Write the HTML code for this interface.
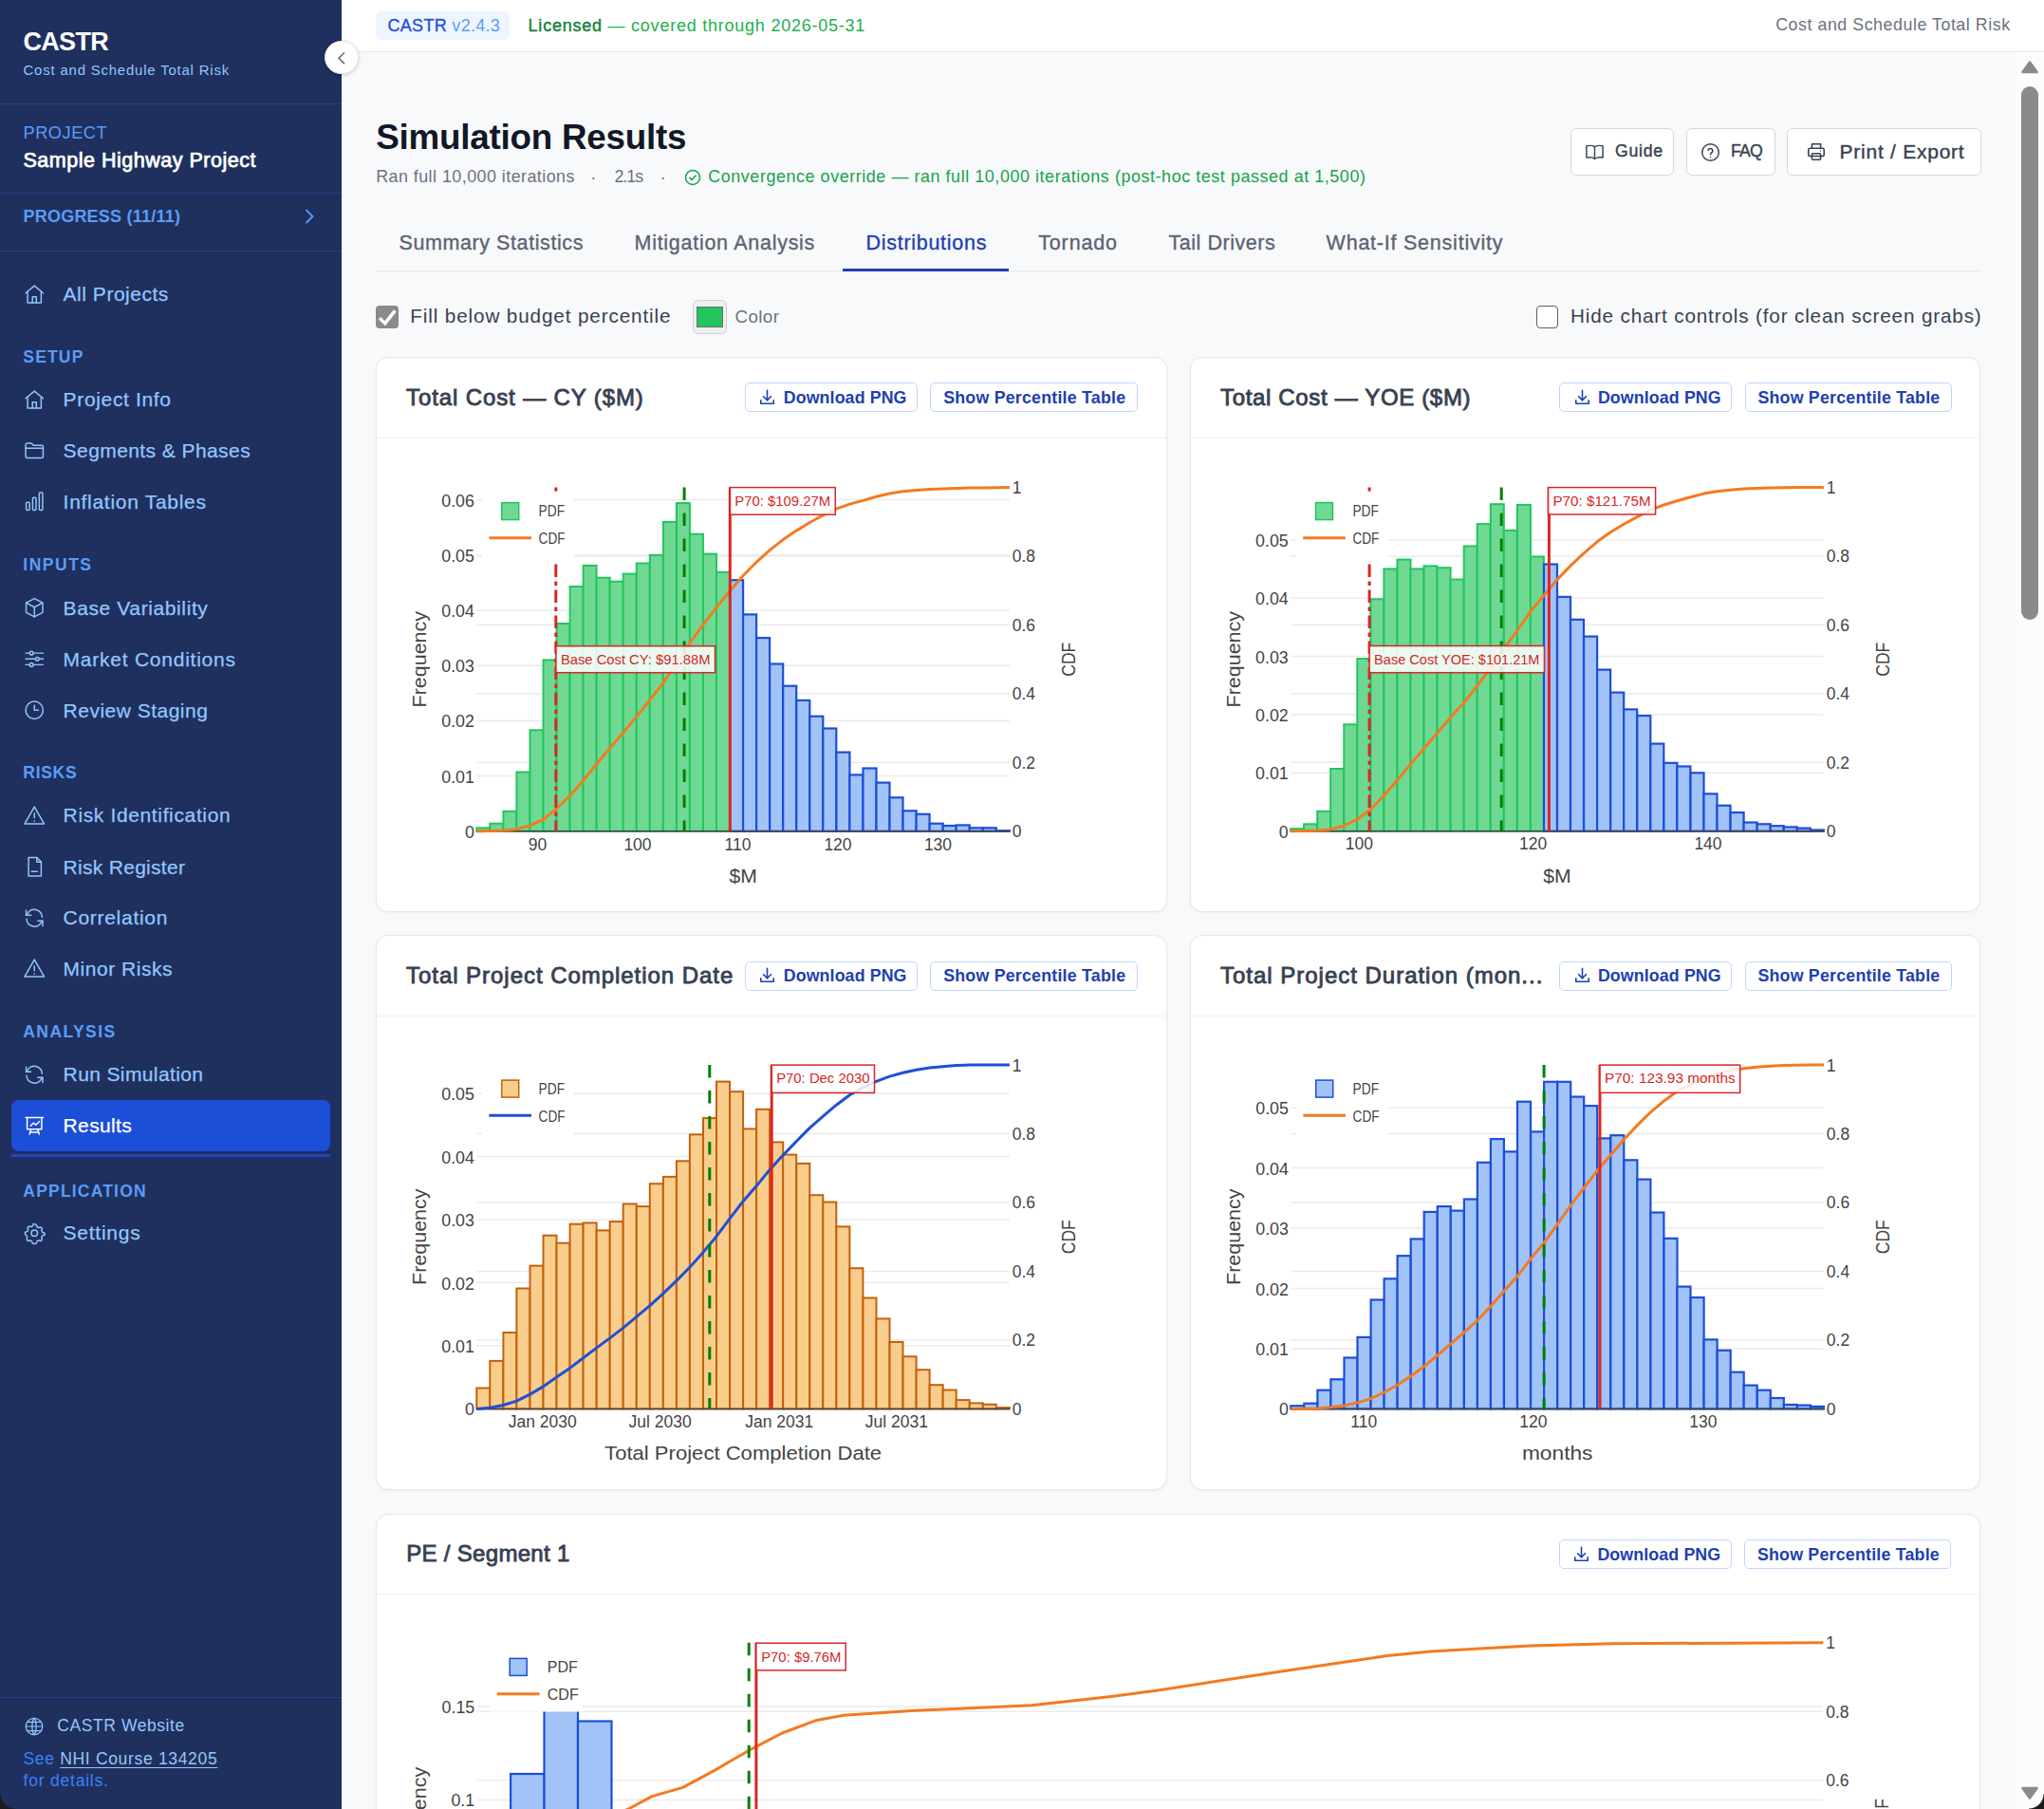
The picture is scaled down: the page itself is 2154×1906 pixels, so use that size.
<!DOCTYPE html><html><head><meta charset="utf-8"><title>CASTR</title><style>
*{margin:0;padding:0;box-sizing:border-box}
html,body{width:2154px;height:1906px;overflow:hidden;background:#f8f9fb;font-family:"Liberation Sans",sans-serif}
.t{position:absolute;white-space:nowrap;line-height:1}
.ic{position:absolute;overflow:visible}
#sb{position:absolute;left:0;top:0;width:360px;height:1906px;background:#1f305e}
.hr{position:absolute;left:0;width:360px;height:1.2px;background:#21408e}
#top{position:absolute;left:360px;top:0;width:1794px;height:55.2px;background:#fff;border-bottom:1.2px solid #e5e7eb}
.card{position:absolute;background:#fff;border:1.3px solid #e6e8eb;border-radius:13px;box-shadow:0 1px 3px rgba(0,0,0,.05)}
#ch{position:absolute;left:0;top:0;overflow:hidden}
#root{position:relative;width:2154px;height:1906px;overflow:hidden}
</style></head><body><div id="root">
<div id="sb"></div>
<div class="t" id="t1" style="left:24.5px;top:30.94px;font-size:27px;color:#ffffff;font-weight:700;letter-spacing:-0.695px;">CASTR</div>
<div class="t" id="t2" style="left:24.5px;top:67.39px;font-size:14.9px;color:#93c5fd;font-weight:400;letter-spacing:0.831px;">Cost and Schedule Total Risk</div>
<div class="hr" style="top:109px"></div>
<div class="t" id="t3" style="left:24.5px;top:130.59px;font-size:18.2px;color:#5b9cf6;font-weight:400;letter-spacing:0.534px;">PROJECT</div>
<div class="t" id="t4" style="left:24.5px;top:158.90px;font-size:21.5px;color:#ffffff;font-weight:400;letter-spacing:0.508px;-webkit-text-stroke:0.75px #ffffff">Sample Highway Project</div>
<div class="hr" style="top:203px"></div>
<div class="t" id="t5" style="left:24.5px;top:218.56px;font-size:18px;color:#5b9cf6;font-weight:700;letter-spacing:0.220px;">PROGRESS (11/11)</div>
<svg class="ic" style="left:316px;top:218px;width:20px;height:20px" viewBox="0 0 20 20"><path d="M7 3.5 13.5 10 7 16.5" fill="none" stroke="#5b9cf6" stroke-width="1.8" stroke-linecap="round"/></svg>
<div class="hr" style="top:264px"></div>
<div style="position:absolute;left:12.2px;top:1159.2px;width:335.6px;height:53.5px;background:#1d4ed8;border-radius:7.5px"></div>
<div style="position:absolute;left:12.2px;top:1216.3px;width:335.6px;height:2.6px;background:#2545b8"></div>
<svg class="ic" style="left:23.5px;top:297.7px;width:24.5px;height:24.5px;color:#93c5fd" viewBox="0 0 24 24" fill="none" stroke="currentColor" stroke-width="1.45" stroke-linecap="round" stroke-linejoin="round"><path d="M3 10.5 12 3l9 7.5"/><path d="M5 9v11.5h14V9"/><path d="M10 20.5v-6h4v6"/></svg>
<div class="t" id="t6" style="left:66.6px;top:299.22px;font-size:21px;color:#93c5fd;font-weight:400;letter-spacing:0.521px;-webkit-text-stroke:0.25px #93c5fd">All Projects</div>
<div class="t" id="t7" style="left:24.3px;top:368.09px;font-size:17.5px;color:#5b9cf6;font-weight:700;letter-spacing:1.173px;">SETUP</div>
<svg class="ic" style="left:23.5px;top:408.7px;width:24.5px;height:24.5px;color:#93c5fd" viewBox="0 0 24 24" fill="none" stroke="currentColor" stroke-width="1.45" stroke-linecap="round" stroke-linejoin="round"><path d="M3 10.5 12 3l9 7.5"/><path d="M5 9v11.5h14V9"/><path d="M10 20.5v-6h4v6"/></svg>
<div class="t" id="t8" style="left:66.6px;top:410.22px;font-size:21px;color:#93c5fd;font-weight:400;letter-spacing:0.657px;-webkit-text-stroke:0.25px #93c5fd">Project Info</div>
<svg class="ic" style="left:23.5px;top:462.3px;width:24.5px;height:24.5px;color:#93c5fd" viewBox="0 0 24 24" fill="none" stroke="currentColor" stroke-width="1.45" stroke-linecap="round" stroke-linejoin="round"><path d="M3 6.5a1.5 1.5 0 0 1 1.5-1.5h4.5l2 2h8.5A1.5 1.5 0 0 1 21 8.5v10a1.5 1.5 0 0 1-1.5 1.5h-15A1.5 1.5 0 0 1 3 18.5z"/><path d="M3 10h18"/></svg>
<div class="t" id="t9" style="left:66.6px;top:463.82px;font-size:21px;color:#93c5fd;font-weight:400;letter-spacing:0.424px;-webkit-text-stroke:0.25px #93c5fd">Segments & Phases</div>
<svg class="ic" style="left:23.5px;top:516.4000000000001px;width:24.5px;height:24.5px;color:#93c5fd" viewBox="0 0 24 24" fill="none" stroke="currentColor" stroke-width="1.45" stroke-linecap="round" stroke-linejoin="round"><rect x="3.5" y="13" width="3.5" height="8" rx="1"/><rect x="10.25" y="8" width="3.5" height="13" rx="1"/><rect x="17" y="3" width="3.5" height="18" rx="1"/></svg>
<div class="t" id="t10" style="left:66.6px;top:517.92px;font-size:21px;color:#93c5fd;font-weight:400;letter-spacing:0.709px;-webkit-text-stroke:0.25px #93c5fd">Inflation Tables</div>
<div class="t" id="t11" style="left:24.3px;top:586.89px;font-size:17.5px;color:#5b9cf6;font-weight:700;letter-spacing:1.512px;">INPUTS</div>
<svg class="ic" style="left:23.5px;top:628.1px;width:24.5px;height:24.5px;color:#93c5fd" viewBox="0 0 24 24" fill="none" stroke="currentColor" stroke-width="1.45" stroke-linecap="round" stroke-linejoin="round"><path d="M12 2.5 20.5 7v10L12 21.5 3.5 17V7z"/><path d="M3.5 7 12 11.5 20.5 7"/><path d="M12 11.5v10"/></svg>
<div class="t" id="t12" style="left:66.6px;top:629.62px;font-size:21px;color:#93c5fd;font-weight:400;letter-spacing:0.605px;-webkit-text-stroke:0.25px #93c5fd">Base Variability</div>
<svg class="ic" style="left:23.5px;top:682.4000000000001px;width:24.5px;height:24.5px;color:#93c5fd" viewBox="0 0 24 24" fill="none" stroke="currentColor" stroke-width="1.45" stroke-linecap="round" stroke-linejoin="round"><path d="M3 6h18M3 12h18M3 18h18"/><circle cx="9" cy="6" r="1.8" fill="#1f305e"/><circle cx="15" cy="12" r="1.8" fill="#1f305e"/><circle cx="9" cy="18" r="1.8" fill="#1f305e"/></svg>
<div class="t" id="t13" style="left:66.6px;top:683.92px;font-size:21px;color:#93c5fd;font-weight:400;letter-spacing:0.757px;-webkit-text-stroke:0.25px #93c5fd">Market Conditions</div>
<svg class="ic" style="left:23.5px;top:736.3000000000001px;width:24.5px;height:24.5px;color:#93c5fd" viewBox="0 0 24 24" fill="none" stroke="currentColor" stroke-width="1.45" stroke-linecap="round" stroke-linejoin="round"><circle cx="12" cy="12" r="9"/><path d="M12 7v5h4"/></svg>
<div class="t" id="t14" style="left:66.6px;top:737.82px;font-size:21px;color:#93c5fd;font-weight:400;letter-spacing:0.488px;-webkit-text-stroke:0.25px #93c5fd">Review Staging</div>
<div class="t" id="t15" style="left:24.3px;top:806.29px;font-size:17.5px;color:#5b9cf6;font-weight:700;letter-spacing:0.716px;">RISKS</div>
<svg class="ic" style="left:23.5px;top:846.9000000000001px;width:24.5px;height:24.5px;color:#93c5fd" viewBox="0 0 24 24" fill="none" stroke="currentColor" stroke-width="1.45" stroke-linecap="round" stroke-linejoin="round"><path d="M12 3 22 20.5H2z"/><path d="M12 9.5v5"/><path d="M12 17.6v.2"/></svg>
<div class="t" id="t16" style="left:66.6px;top:848.42px;font-size:21px;color:#93c5fd;font-weight:400;letter-spacing:0.638px;-webkit-text-stroke:0.25px #93c5fd">Risk Identification</div>
<svg class="ic" style="left:23.5px;top:901.3000000000001px;width:24.5px;height:24.5px;color:#93c5fd" viewBox="0 0 24 24" fill="none" stroke="currentColor" stroke-width="1.45" stroke-linecap="round" stroke-linejoin="round"><path d="M6 2.5h8.5l4.5 4.5v14.5H6z"/><path d="M14.5 2.5V7H19"/><path d="M9 17h6"/></svg>
<div class="t" id="t17" style="left:66.6px;top:902.82px;font-size:21px;color:#93c5fd;font-weight:400;letter-spacing:0.290px;-webkit-text-stroke:0.25px #93c5fd">Risk Register</div>
<svg class="ic" style="left:23.5px;top:954.9000000000001px;width:24.5px;height:24.5px;color:#93c5fd" viewBox="0 0 24 24" fill="none" stroke="currentColor" stroke-width="1.45" stroke-linecap="round" stroke-linejoin="round"><path d="M20 11a8 8 0 0 0-14.6-4.2L3.5 9"/><path d="M3.5 4v5h5"/><path d="M4 13a8 8 0 0 0 14.6 4.2l1.9-2.2"/><path d="M20.5 20v-5h-5"/></svg>
<div class="t" id="t18" style="left:66.6px;top:956.42px;font-size:21px;color:#93c5fd;font-weight:400;letter-spacing:0.704px;-webkit-text-stroke:0.25px #93c5fd">Correlation</div>
<svg class="ic" style="left:23.5px;top:1008.3px;width:24.5px;height:24.5px;color:#93c5fd" viewBox="0 0 24 24" fill="none" stroke="currentColor" stroke-width="1.45" stroke-linecap="round" stroke-linejoin="round"><path d="M12 3 22 20.5H2z"/><path d="M12 9.5v5"/><path d="M12 17.6v.2"/></svg>
<div class="t" id="t19" style="left:66.6px;top:1009.82px;font-size:21px;color:#93c5fd;font-weight:400;letter-spacing:0.517px;-webkit-text-stroke:0.25px #93c5fd">Minor Risks</div>
<div class="t" id="t20" style="left:24.3px;top:1078.89px;font-size:17.5px;color:#5b9cf6;font-weight:700;letter-spacing:1.423px;">ANALYSIS</div>
<svg class="ic" style="left:23.5px;top:1119.6000000000001px;width:24.5px;height:24.5px;color:#93c5fd" viewBox="0 0 24 24" fill="none" stroke="currentColor" stroke-width="1.45" stroke-linecap="round" stroke-linejoin="round"><path d="M20 11a8 8 0 0 0-14.6-4.2L3.5 9"/><path d="M3.5 4v5h5"/><path d="M4 13a8 8 0 0 0 14.6 4.2l1.9-2.2"/><path d="M20.5 20v-5h-5"/></svg>
<div class="t" id="t21" style="left:66.6px;top:1121.12px;font-size:21px;color:#93c5fd;font-weight:400;letter-spacing:0.381px;-webkit-text-stroke:0.25px #93c5fd">Run Simulation</div>
<svg class="ic" style="left:23.5px;top:1173.5px;width:24.5px;height:24.5px;color:#ffffff" viewBox="0 0 24 24" fill="none" stroke="currentColor" stroke-width="1.45" stroke-linecap="round" stroke-linejoin="round"><path d="M3 3.5h18"/><path d="M4.5 3.5v12h15v-12"/><path d="M8 12l3-3 2.5 2 3.5-3.5"/><path d="M8.5 15.5 7 20.5M15.5 15.5l1.5 5M7.5 18.5h9"/></svg>
<div class="t" id="t22" style="left:66.6px;top:1175.02px;font-size:21px;color:#ffffff;font-weight:400;letter-spacing:0.355px;-webkit-text-stroke:0.25px #ffffff">Results</div>
<div class="t" id="t23" style="left:24.3px;top:1246.89px;font-size:17.5px;color:#5b9cf6;font-weight:700;letter-spacing:1.202px;">APPLICATION</div>
<svg class="ic" style="left:23.5px;top:1286.9px;width:24.5px;height:24.5px;color:#93c5fd" viewBox="0 0 24 24" fill="none" stroke="currentColor" stroke-width="1.45" stroke-linecap="round" stroke-linejoin="round"><path d="M12 2.8l2 .4.6 2.2 1.8 1 2.2-.6 1.4 1.5-.6 2.2 1 1.8 2.2.6v2l-2.2.6-1 1.8.6 2.2-1.4 1.5-2.2-.6-1.8 1-.6 2.2-2 .4-2-.4-.6-2.2-1.8-1-2.2.6-1.4-1.5.6-2.2-1-1.8L2.4 13v-2l2.2-.6 1-1.8L5 6.4l1.4-1.5 2.2.6 1.8-1 .6-2.2z"/><circle cx="12" cy="12" r="3.2"/></svg>
<div class="t" id="t24" style="left:66.6px;top:1288.42px;font-size:21px;color:#93c5fd;font-weight:400;letter-spacing:0.738px;-webkit-text-stroke:0.25px #93c5fd">Settings</div>
<div class="hr" style="top:1788px"></div>
<svg class="ic" style="left:25.4px;top:1807.5px;width:22px;height:22px;color:#93c5fd" viewBox="0 0 24 24" fill="none" stroke="currentColor" stroke-width="1.35" stroke-linecap="round" stroke-linejoin="round"><circle cx="12" cy="12" r="9.5"/><path d="M2.5 12h19"/><path d="M12 2.5c3 3 3 16 0 19M12 2.5c-3 3-3 16 0 19"/><path d="M4 7h16M4 17h16"/></svg>
<div class="t" id="t25" style="left:60.3px;top:1810.19px;font-size:17.5px;color:#93c5fd;font-weight:400;letter-spacing:0.573px;">CASTR Website</div>
<div class="t" id="t26" style="left:24.5px;top:1845.49px;font-size:17.5px;color:#3b82f6;font-weight:400;letter-spacing:0.674px;">See <span style="color:#9cc3f8;text-decoration:underline;text-underline-offset:3px;text-decoration-thickness:1px">NHI Course 134205</span></div>
<div class="t" id="t27" style="left:24.5px;top:1867.99px;font-size:17.5px;color:#3b82f6;font-weight:400;letter-spacing:0.792px;">for details.</div>
<div id="top"></div>
<div style="position:absolute;left:396.2px;top:12px;width:141.2px;height:29.6px;background:#eef5ff;border-radius:6px"></div>
<div class="t" id="t28" style="left:408.5px;top:17.86px;font-size:18px;color:#1d4ed8;font-weight:400;letter-spacing:0.300px;"><span style="color:#1d4ed8;-webkit-text-stroke:0.3px #1d4ed8">CASTR</span> <span style="color:#5b9cf6">v2.4.3</span></div>
<div class="t" id="t29" style="left:556.6px;top:17.86px;font-size:18px;color:#22b04f;font-weight:400;letter-spacing:0.765px;"><span style="color:#15803d;-webkit-text-stroke:0.4px #15803d">Licensed</span> — covered through 2026-05-31</div>
<div class="t" id="t30" style="left:1871.2px;top:17.63px;font-size:17.8px;color:#6b7280;font-weight:400;letter-spacing:0.552px;">Cost and Schedule Total Risk</div>
<div style="position:absolute;left:342.2px;top:42.8px;width:35.4px;height:35.4px;border-radius:50%;background:#fff;border:1px solid #e9eaec;box-shadow:0 1px 4px rgba(0,0,0,.18)"></div>
<svg class="ic" style="left:350px;top:50.6px;width:20px;height:20px" viewBox="0 0 20 20"><path d="M12.6 4.6 7 10.2l5.6 5.6" fill="none" stroke="#4b5563" stroke-width="1.3" stroke-linecap="round"/></svg>
<div class="t" id="t31" style="left:396.2px;top:126.95px;font-size:36.8px;color:#111827;font-weight:700;letter-spacing:-0.231px;">Simulation Results</div>
<div class="t" id="t32" style="left:396.2px;top:177.85px;font-size:17.9px;color:#6b7280;font-weight:400;letter-spacing:0.454px;">Ran full 10,000 iterations</div>
<div class="t" id="t33" style="left:622.3px;top:177.59px;font-size:18.8px;color:#6b7280;font-weight:400;letter-spacing:0.000px;">·</div>
<div class="t" id="t34" style="left:647.4px;top:177.85px;font-size:17.9px;color:#6b7280;font-weight:400;letter-spacing:-1.018px;">2.1s</div>
<div class="t" id="t35" style="left:695.6px;top:177.59px;font-size:18.8px;color:#6b7280;font-weight:400;letter-spacing:0.000px;">·</div>
<svg class="ic" style="left:720.5px;top:177.5px;width:18px;height:18px" viewBox="0 0 24 24" fill="none" stroke="#16a34a" stroke-width="2" stroke-linecap="round" stroke-linejoin="round"><circle cx="12" cy="12" r="10"/><path d="M8 12.5l2.8 2.7L16 9.5"/></svg>
<div class="t" id="t36" style="left:746.3px;top:177.85px;font-size:17.9px;color:#16a34a;font-weight:400;letter-spacing:0.577px;">Convergence override — ran full 10,000 iterations (post-hoc test passed at 1,500)</div>
<div style="position:absolute;left:1655.3px;top:135.1px;width:109.20000000000005px;height:49.5px;border:1.3px solid #d4d7dd;border-radius:6px;background:#fff;box-sizing:border-box"></div>
<div style="position:absolute;left:1777.3px;top:135.1px;width:93.40000000000009px;height:49.5px;border:1.3px solid #d4d7dd;border-radius:6px;background:#fff;box-sizing:border-box"></div>
<div style="position:absolute;left:1883.3px;top:135.1px;width:204.60000000000014px;height:49.5px;border:1.3px solid #d4d7dd;border-radius:6px;background:#fff;box-sizing:border-box"></div>
<svg class="ic" style="left:1669.5px;top:149.5px;width:21px;height:21px" viewBox="0 0 24 24" fill="none" stroke="#3d4655" stroke-width="1.7" stroke-linejoin="round"><path d="M12 5.2C10 4 6 3.6 2.2 4.2v14.2c3.8-.6 7.8-.2 9.8 1.6 2-1.8 6-2.2 9.8-1.6V4.2C18 3.6 14 4 12 5.2z"/><path d="M12 5.2V19.5"/></svg>
<div class="t" id="t37" style="left:1701.9px;top:150.92px;font-size:17.7px;color:#374151;font-weight:400;letter-spacing:0.740px;-webkit-text-stroke:0.4px #374151">Guide</div>
<svg class="ic" style="left:1791.5px;top:150px;width:21px;height:21px" viewBox="0 0 24 24" fill="none" stroke="#374151" stroke-width="1.7" stroke-linecap="round"><circle cx="12" cy="12" r="10"/><path d="M9.2 9.3a2.9 2.9 0 0 1 5.6 1c0 1.9-2.8 2.4-2.8 4.2"/><path d="M12 17.6v.2"/></svg>
<div class="t" id="t38" style="left:1824.0px;top:150.92px;font-size:17.7px;color:#374151;font-weight:400;letter-spacing:-0.764px;-webkit-text-stroke:0.4px #374151">FAQ</div>
<svg class="ic" style="left:1903px;top:149px;width:22px;height:22px" viewBox="0 0 24 24" fill="none" stroke="#374151" stroke-width="1.7" stroke-linejoin="round"><path d="M7 8V3h10v5"/><rect x="3" y="8" width="18" height="9" rx="2"/><rect x="7" y="14" width="10" height="7" rx="1"/><path d="M16.5 11h1"/></svg>
<div class="t" id="t39" style="left:1938.6px;top:149.12px;font-size:21px;color:#374151;font-weight:400;letter-spacing:0.744px;-webkit-text-stroke:0.4px #374151">Print / Export</div>
<div style="position:absolute;left:396px;top:284.7px;width:1691.6px;height:1.4px;background:#e5e7eb"></div>
<div class="t" id="t40" style="left:420.5px;top:246.30px;font-size:21.5px;color:#5b6472;font-weight:400;letter-spacing:0.583px;-webkit-text-stroke:0.35px #5b6472">Summary Statistics</div>
<div class="t" id="t41" style="left:668.5px;top:246.30px;font-size:21.5px;color:#5b6472;font-weight:400;letter-spacing:0.723px;-webkit-text-stroke:0.35px #5b6472">Mitigation Analysis</div>
<div class="t" id="t42" style="left:912.5px;top:246.30px;font-size:21.5px;color:#1e40af;font-weight:400;letter-spacing:0.716px;-webkit-text-stroke:0.35px #1e40af">Distributions</div>
<div class="t" id="t43" style="left:1094.2px;top:246.30px;font-size:21.5px;color:#5b6472;font-weight:400;letter-spacing:0.864px;-webkit-text-stroke:0.35px #5b6472">Tornado</div>
<div class="t" id="t44" style="left:1231.5px;top:246.30px;font-size:21.5px;color:#5b6472;font-weight:400;letter-spacing:0.533px;-webkit-text-stroke:0.35px #5b6472">Tail Drivers</div>
<div class="t" id="t45" style="left:1397.6px;top:246.30px;font-size:21.5px;color:#5b6472;font-weight:400;letter-spacing:0.769px;-webkit-text-stroke:0.35px #5b6472">What-If Sensitivity</div>
<div style="position:absolute;left:888.2px;top:283px;width:174.9px;height:3.1px;background:#1e40af"></div>
<div style="position:absolute;left:395.7px;top:322.3px;width:24px;height:24px;border-radius:4px;background:#8a8a8a"></div>
<svg class="ic" style="left:395.7px;top:322.3px;width:24px;height:24px" viewBox="0 0 24 24"><path d="M4 13.3l5.8 5.4L20.3 5.3" fill="none" stroke="#fff" stroke-width="3.6"/></svg>
<div class="t" id="t46" style="left:432.3px;top:323.48px;font-size:20.7px;color:#374151;font-weight:400;letter-spacing:0.872px;">Fill below budget percentile</div>
<div style="position:absolute;left:730.3px;top:316.3px;width:35.4px;height:35.6px;border-radius:5.5px;background:#efefef;border:1px solid #cdd1d8;box-sizing:border-box"></div>
<div style="position:absolute;left:733.9px;top:323.2px;width:28.2px;height:21.6px;background:#22c55e;border:1px solid #6f6f6f;box-sizing:border-box"></div>
<div class="t" id="t47" style="left:774.6px;top:325.29px;font-size:18.8px;color:#6b7280;font-weight:400;letter-spacing:0.359px;">Color</div>
<div style="position:absolute;left:1619.2px;top:322.2px;width:23.2px;height:23.7px;border-radius:4px;background:#fff;border:1.6px solid #5f5f5f;box-sizing:border-box"></div>
<div class="t" id="t48" style="left:1655px;top:323.48px;font-size:20.7px;color:#374151;font-weight:400;letter-spacing:0.838px;">Hide chart controls (for clean screen grabs)</div>
<div class="card" style="left:395.6px;top:376.0px;width:834.6999999999999px;height:585.3px"></div><div style="position:absolute;left:396.6px;top:460.6px;width:832.6999999999999px;height:1.3px;background:#f0f1f3"></div><div class="t" id="t49" style="left:428.0px;top:406.68px;font-size:24px;color:#374151;font-weight:400;letter-spacing:0.889px;-webkit-text-stroke:0.85px #374151">Total Cost — CY ($M)</div><div style="position:absolute;left:785.1px;top:403.4px;width:181.89999999999998px;height:30.900000000000034px;border:1.3px solid #bfd7fb;border-radius:5px;background:#fff;box-sizing:border-box"></div><div style="position:absolute;left:980.3px;top:403.4px;width:218.29999999999995px;height:30.900000000000034px;border:1.3px solid #bfd7fb;border-radius:5px;background:#fff;box-sizing:border-box"></div><svg class="ic" style="left:799.3px;top:409.0px;width:19px;height:19px" viewBox="0 0 24 24" fill="none" stroke="#1e40af" stroke-width="2" stroke-linecap="round" stroke-linejoin="round"><path d="M12 3v13"/><path d="M7 11l5 5 5-5"/><path d="M3.5 16v4.5h17V16"/></svg><div class="t" id="t50" style="left:825.7px;top:410.93px;font-size:17.8px;color:#1e40af;font-weight:700;letter-spacing:0.122px;">Download PNG</div><div class="t" id="t51" style="left:994.2px;top:410.93px;font-size:17.8px;color:#1e40af;font-weight:700;letter-spacing:0.222px;">Show Percentile Table</div>
<div class="card" style="left:1253.6px;top:376.0px;width:833.9000000000001px;height:585.3px"></div><div style="position:absolute;left:1254.6px;top:460.6px;width:831.9000000000001px;height:1.3px;background:#f0f1f3"></div><div class="t" id="t52" style="left:1286.0px;top:406.68px;font-size:24px;color:#374151;font-weight:400;letter-spacing:0.662px;-webkit-text-stroke:0.85px #374151">Total Cost — YOE ($M)</div><div style="position:absolute;left:1643.3000000000002px;top:403.4px;width:181.9000000000001px;height:30.900000000000034px;border:1.3px solid #bfd7fb;border-radius:5px;background:#fff;box-sizing:border-box"></div><div style="position:absolute;left:1838.5000000000002px;top:403.4px;width:218.29999999999995px;height:30.900000000000034px;border:1.3px solid #bfd7fb;border-radius:5px;background:#fff;box-sizing:border-box"></div><svg class="ic" style="left:1657.5px;top:409.0px;width:19px;height:19px" viewBox="0 0 24 24" fill="none" stroke="#1e40af" stroke-width="2" stroke-linecap="round" stroke-linejoin="round"><path d="M12 3v13"/><path d="M7 11l5 5 5-5"/><path d="M3.5 16v4.5h17V16"/></svg><div class="t" id="t53" style="left:1683.9px;top:410.93px;font-size:17.8px;color:#1e40af;font-weight:700;letter-spacing:0.122px;">Download PNG</div><div class="t" id="t54" style="left:1852.4px;top:410.93px;font-size:17.8px;color:#1e40af;font-weight:700;letter-spacing:0.222px;">Show Percentile Table</div>
<div class="card" style="left:395.6px;top:985.4px;width:834.6999999999999px;height:584.6px"></div><div style="position:absolute;left:396.6px;top:1070.0px;width:832.6999999999999px;height:1.3px;background:#f0f1f3"></div><div class="t" id="t55" style="left:428.0px;top:1016.08px;font-size:24px;color:#374151;font-weight:400;letter-spacing:0.959px;-webkit-text-stroke:0.85px #374151">Total Project Completion Date</div><div style="position:absolute;left:785.1px;top:1012.8px;width:181.89999999999998px;height:30.90000000000009px;border:1.3px solid #bfd7fb;border-radius:5px;background:#fff;box-sizing:border-box"></div><div style="position:absolute;left:980.3px;top:1012.8px;width:218.29999999999995px;height:30.90000000000009px;border:1.3px solid #bfd7fb;border-radius:5px;background:#fff;box-sizing:border-box"></div><svg class="ic" style="left:799.3px;top:1018.4px;width:19px;height:19px" viewBox="0 0 24 24" fill="none" stroke="#1e40af" stroke-width="2" stroke-linecap="round" stroke-linejoin="round"><path d="M12 3v13"/><path d="M7 11l5 5 5-5"/><path d="M3.5 16v4.5h17V16"/></svg><div class="t" id="t56" style="left:825.7px;top:1020.33px;font-size:17.8px;color:#1e40af;font-weight:700;letter-spacing:0.122px;">Download PNG</div><div class="t" id="t57" style="left:994.2px;top:1020.33px;font-size:17.8px;color:#1e40af;font-weight:700;letter-spacing:0.222px;">Show Percentile Table</div>
<div class="card" style="left:1253.6px;top:985.4px;width:833.9000000000001px;height:584.6px"></div><div style="position:absolute;left:1254.6px;top:1070.0px;width:831.9000000000001px;height:1.3px;background:#f0f1f3"></div><div class="t" id="t58" style="left:1286.0px;top:1016.08px;font-size:24px;color:#374151;font-weight:400;letter-spacing:0.984px;-webkit-text-stroke:0.85px #374151">Total Project Duration (mon...</div><div style="position:absolute;left:1643.3000000000002px;top:1012.8px;width:181.9000000000001px;height:30.90000000000009px;border:1.3px solid #bfd7fb;border-radius:5px;background:#fff;box-sizing:border-box"></div><div style="position:absolute;left:1838.5000000000002px;top:1012.8px;width:218.29999999999995px;height:30.90000000000009px;border:1.3px solid #bfd7fb;border-radius:5px;background:#fff;box-sizing:border-box"></div><svg class="ic" style="left:1657.5px;top:1018.4px;width:19px;height:19px" viewBox="0 0 24 24" fill="none" stroke="#1e40af" stroke-width="2" stroke-linecap="round" stroke-linejoin="round"><path d="M12 3v13"/><path d="M7 11l5 5 5-5"/><path d="M3.5 16v4.5h17V16"/></svg><div class="t" id="t59" style="left:1683.9px;top:1020.33px;font-size:17.8px;color:#1e40af;font-weight:700;letter-spacing:0.122px;">Download PNG</div><div class="t" id="t60" style="left:1852.4px;top:1020.33px;font-size:17.8px;color:#1e40af;font-weight:700;letter-spacing:0.222px;">Show Percentile Table</div>
<div class="card" style="left:395.9px;top:1594.6px;width:1691.1px;height:705.4000000000001px"></div><div style="position:absolute;left:396.9px;top:1679.1999999999998px;width:1689.1px;height:1.3px;background:#f0f1f3"></div><div class="t" id="t61" style="left:428.3px;top:1625.28px;font-size:24px;color:#374151;font-weight:400;letter-spacing:0.296px;-webkit-text-stroke:0.85px #374151">PE / Segment 1</div><div style="position:absolute;left:1642.8000000000002px;top:1622.0px;width:181.9000000000001px;height:30.899999999999864px;border:1.3px solid #bfd7fb;border-radius:5px;background:#fff;box-sizing:border-box"></div><div style="position:absolute;left:1838.0000000000002px;top:1622.0px;width:218.29999999999995px;height:30.899999999999864px;border:1.3px solid #bfd7fb;border-radius:5px;background:#fff;box-sizing:border-box"></div><svg class="ic" style="left:1657.0px;top:1627.6px;width:19px;height:19px" viewBox="0 0 24 24" fill="none" stroke="#1e40af" stroke-width="2" stroke-linecap="round" stroke-linejoin="round"><path d="M12 3v13"/><path d="M7 11l5 5 5-5"/><path d="M3.5 16v4.5h17V16"/></svg><div class="t" id="t62" style="left:1683.4px;top:1629.53px;font-size:17.8px;color:#1e40af;font-weight:700;letter-spacing:0.122px;">Download PNG</div><div class="t" id="t63" style="left:1851.9px;top:1629.53px;font-size:17.8px;color:#1e40af;font-weight:700;letter-spacing:0.222px;">Show Percentile Table</div>
<svg id="ch" width="2154" height="1906" viewBox="0 0 2154 1906"><line x1="502.3" x2="1063.9" y1="803.4" y2="803.4" stroke="#ebebeb" stroke-width="1.5"/>
<line x1="502.3" x2="1063.9" y1="730.9" y2="730.9" stroke="#ebebeb" stroke-width="1.5"/>
<line x1="502.3" x2="1063.9" y1="658.5" y2="658.5" stroke="#ebebeb" stroke-width="1.5"/>
<line x1="502.3" x2="1063.9" y1="586" y2="586" stroke="#ebebeb" stroke-width="1.5"/>
<line x1="502.3" x2="1063.9" y1="817.6" y2="817.6" stroke="#ebebeb" stroke-width="1.5"/>
<line x1="502.3" x2="1063.9" y1="759.4" y2="759.4" stroke="#ebebeb" stroke-width="1.5"/>
<line x1="502.3" x2="1063.9" y1="701.2" y2="701.2" stroke="#ebebeb" stroke-width="1.5"/>
<line x1="502.3" x2="1063.9" y1="643" y2="643" stroke="#ebebeb" stroke-width="1.5"/>
<line x1="502.3" x2="1063.9" y1="584.8" y2="584.8" stroke="#ebebeb" stroke-width="1.5"/>
<line x1="502.3" x2="1063.9" y1="526.6" y2="526.6" stroke="#ebebeb" stroke-width="1.5"/>
<rect x="502.3" y="872.3" width="14" height="3.5" fill="#6fd994" stroke="#22c55e" stroke-width="2.0"/>
<rect x="516.3" y="867.7" width="14" height="8.1" fill="#6fd994" stroke="#22c55e" stroke-width="2.0"/>
<rect x="530.4" y="854.8" width="14" height="21" fill="#6fd994" stroke="#22c55e" stroke-width="2.0"/>
<rect x="544.4" y="813.5" width="14" height="62.3" fill="#6fd994" stroke="#22c55e" stroke-width="2.0"/>
<rect x="558.5" y="769.3" width="14" height="106.5" fill="#6fd994" stroke="#22c55e" stroke-width="2.0"/>
<rect x="572.5" y="695.4" width="14" height="180.4" fill="#6fd994" stroke="#22c55e" stroke-width="2.0"/>
<rect x="586.5" y="657" width="14" height="218.8" fill="#6fd994" stroke="#22c55e" stroke-width="2.0"/>
<rect x="600.6" y="618" width="14" height="257.8" fill="#6fd994" stroke="#22c55e" stroke-width="2.0"/>
<rect x="614.6" y="595.9" width="14" height="279.9" fill="#6fd994" stroke="#22c55e" stroke-width="2.0"/>
<rect x="628.7" y="608.7" width="14" height="267.1" fill="#6fd994" stroke="#22c55e" stroke-width="2.0"/>
<rect x="642.7" y="612.7" width="14" height="263.1" fill="#6fd994" stroke="#22c55e" stroke-width="2.0"/>
<rect x="656.7" y="604.6" width="14" height="271.2" fill="#6fd994" stroke="#22c55e" stroke-width="2.0"/>
<rect x="670.8" y="593.5" width="14" height="282.3" fill="#6fd994" stroke="#22c55e" stroke-width="2.0"/>
<rect x="684.8" y="584.8" width="14" height="291" fill="#6fd994" stroke="#22c55e" stroke-width="2.0"/>
<rect x="698.9" y="549.9" width="14" height="325.9" fill="#6fd994" stroke="#22c55e" stroke-width="2.0"/>
<rect x="712.9" y="530.1" width="14" height="345.7" fill="#6fd994" stroke="#22c55e" stroke-width="2.0"/>
<rect x="726.9" y="562.7" width="14" height="313.1" fill="#6fd994" stroke="#22c55e" stroke-width="2.0"/>
<rect x="741" y="583.6" width="14" height="292.2" fill="#6fd994" stroke="#22c55e" stroke-width="2.0"/>
<rect x="755" y="602.8" width="14" height="273" fill="#6fd994" stroke="#22c55e" stroke-width="2.0"/>
<rect x="769.1" y="611.2" width="14" height="264.6" fill="#a1c3f8" stroke="#1d4ed8" stroke-width="2.2"/>
<rect x="783.1" y="647.4" width="14" height="228.4" fill="#a1c3f8" stroke="#1d4ed8" stroke-width="2.2"/>
<rect x="797.1" y="672.1" width="14" height="203.7" fill="#a1c3f8" stroke="#1d4ed8" stroke-width="2.2"/>
<rect x="811.2" y="699.5" width="14" height="176.3" fill="#a1c3f8" stroke="#1d4ed8" stroke-width="2.2"/>
<rect x="825.2" y="722.7" width="14" height="153.1" fill="#a1c3f8" stroke="#1d4ed8" stroke-width="2.2"/>
<rect x="839.3" y="737.9" width="14" height="137.9" fill="#a1c3f8" stroke="#1d4ed8" stroke-width="2.2"/>
<rect x="853.3" y="754.7" width="14" height="121.1" fill="#a1c3f8" stroke="#1d4ed8" stroke-width="2.2"/>
<rect x="867.3" y="767.5" width="14" height="108.3" fill="#a1c3f8" stroke="#1d4ed8" stroke-width="2.2"/>
<rect x="881.4" y="792.6" width="14" height="83.2" fill="#a1c3f8" stroke="#1d4ed8" stroke-width="2.2"/>
<rect x="895.4" y="816.4" width="14" height="59.4" fill="#a1c3f8" stroke="#1d4ed8" stroke-width="2.2"/>
<rect x="909.5" y="809.5" width="14" height="66.3" fill="#a1c3f8" stroke="#1d4ed8" stroke-width="2.2"/>
<rect x="923.5" y="824.6" width="14" height="51.2" fill="#a1c3f8" stroke="#1d4ed8" stroke-width="2.2"/>
<rect x="937.5" y="840.3" width="14" height="35.5" fill="#a1c3f8" stroke="#1d4ed8" stroke-width="2.2"/>
<rect x="951.6" y="854.3" width="14" height="21.5" fill="#a1c3f8" stroke="#1d4ed8" stroke-width="2.2"/>
<rect x="965.6" y="857.8" width="14" height="18" fill="#a1c3f8" stroke="#1d4ed8" stroke-width="2.2"/>
<rect x="979.7" y="867.7" width="14" height="8.1" fill="#a1c3f8" stroke="#1d4ed8" stroke-width="2.2"/>
<rect x="993.7" y="870" width="14" height="5.8" fill="#a1c3f8" stroke="#1d4ed8" stroke-width="2.2"/>
<rect x="1007.7" y="869.4" width="14" height="6.4" fill="#a1c3f8" stroke="#1d4ed8" stroke-width="2.2"/>
<rect x="1021.8" y="872.3" width="14" height="3.5" fill="#a1c3f8" stroke="#1d4ed8" stroke-width="2.2"/>
<rect x="1035.8" y="872.3" width="14" height="3.5" fill="#a1c3f8" stroke="#1d4ed8" stroke-width="2.2"/>
<rect x="1049.9" y="875.2" width="14" height="0.6" fill="#a1c3f8" stroke="#1d4ed8" stroke-width="2.2"/>
<line x1="502.3" x2="1063.9" y1="875.8" y2="875.8" stroke="#444" stroke-width="1.5"/>
<polyline points="502.3,875.8 516.3,875.6 530.4,875.1 544.4,873.8 558.5,869.9 572.5,863.3 586.5,852 600.6,838.4 614.6,822.4 628.7,805 642.7,788.3 656.7,772 670.8,755.1 684.8,737.5 698.9,719.4 712.9,699.1 726.9,677.6 741,658.1 755,639.9 769.1,622.9 783.1,606.5 797.1,592.3 811.2,579.6 825.2,568.6 839.3,559.1 853.3,550.5 867.3,543 881.4,536.2 895.4,531.1 909.5,527.4 923.5,523.2 937.5,520 951.6,517.8 965.6,516.5 979.7,515.4 993.7,514.9 1007.7,514.5 1021.8,514.1 1035.8,513.9 1049.9,513.7 1063.9,513.6" fill="none" stroke="#f47a20" stroke-width="3" stroke-linejoin="round"/>
<line x1="585.8" x2="585.8" y1="513.6" y2="875.8" stroke="#d62728" stroke-width="3" stroke-dasharray="13.5,4.5,4.5,4.5"/>
<line x1="721.1" x2="721.1" y1="513.6" y2="875.8" stroke="#008000" stroke-width="3" stroke-dasharray="13.5,13.5"/>
<line x1="769.3" x2="769.3" y1="513.6" y2="875.8" stroke="#dc2626" stroke-width="3"/>
<rect x="508" y="517.6" width="96.6" height="74" fill="#fff"/>
<rect x="528.7" y="529.6" width="18" height="18" fill="#6fd994" stroke="#22c55e" stroke-width="1.5"/>
<text x="567.6" y="544.2" font-family="Liberation Sans, sans-serif" font-size="16" fill="#444444" textLength="27.4" lengthAdjust="spacingAndGlyphs">PDF</text>
<line x1="515.4" x2="560" y1="566.8" y2="566.8" stroke="#f47a20" stroke-width="3"/>
<text x="567.6" y="573.3" font-family="Liberation Sans, sans-serif" font-size="16" fill="#444444" textLength="28" lengthAdjust="spacingAndGlyphs">CDF</text>
<rect x="769.3" y="513.6" width="110.9" height="28.6" fill="rgba(255,255,255,0.86)" stroke="#d62728" stroke-width="1.5"/>
<text x="774.3" y="532.9" font-family="Liberation Sans, sans-serif" font-size="15.4" fill="#d62728" textLength="100.9" lengthAdjust="spacingAndGlyphs">P70: $109.27M</text>
<rect x="585.9" y="680.7" width="167.6" height="28" fill="rgba(255,255,255,0.86)" stroke="#d62728" stroke-width="1.5"/>
<text x="590.9" y="700" font-family="Liberation Sans, sans-serif" font-size="15.4" fill="#d62728" textLength="157.6" lengthAdjust="spacingAndGlyphs">Base Cost CY: $91.88M</text>
<text x="499.9" y="882.8" text-anchor="end" font-family="Liberation Sans, sans-serif" font-size="17.8" fill="#444444">0</text>
<text x="499.9" y="824.6" text-anchor="end" font-family="Liberation Sans, sans-serif" font-size="17.8" fill="#444444">0.01</text>
<text x="499.9" y="766.4" text-anchor="end" font-family="Liberation Sans, sans-serif" font-size="17.8" fill="#444444">0.02</text>
<text x="499.9" y="708.2" text-anchor="end" font-family="Liberation Sans, sans-serif" font-size="17.8" fill="#444444">0.03</text>
<text x="499.9" y="650" text-anchor="end" font-family="Liberation Sans, sans-serif" font-size="17.8" fill="#444444">0.04</text>
<text x="499.9" y="591.8" text-anchor="end" font-family="Liberation Sans, sans-serif" font-size="17.8" fill="#444444">0.05</text>
<text x="499.9" y="533.6" text-anchor="end" font-family="Liberation Sans, sans-serif" font-size="17.8" fill="#444444">0.06</text>
<text x="1066.7" y="882.2" font-family="Liberation Sans, sans-serif" font-size="17.5" fill="#444444">0</text>
<text x="1066.7" y="809.8" font-family="Liberation Sans, sans-serif" font-size="17.5" fill="#444444">0.2</text>
<text x="1066.7" y="737.3" font-family="Liberation Sans, sans-serif" font-size="17.5" fill="#444444">0.4</text>
<text x="1066.7" y="664.9" font-family="Liberation Sans, sans-serif" font-size="17.5" fill="#444444">0.6</text>
<text x="1066.7" y="592.4" font-family="Liberation Sans, sans-serif" font-size="17.5" fill="#444444">0.8</text>
<text x="1066.7" y="520" font-family="Liberation Sans, sans-serif" font-size="17.5" fill="#444444">1</text>
<text x="566.5" y="895.5" text-anchor="middle" font-family="Liberation Sans, sans-serif" font-size="17.5" fill="#444444">90</text>
<text x="672" y="895.5" text-anchor="middle" font-family="Liberation Sans, sans-serif" font-size="17.5" fill="#444444">100</text>
<text x="777.5" y="895.5" text-anchor="middle" font-family="Liberation Sans, sans-serif" font-size="17.5" fill="#444444">110</text>
<text x="883" y="895.5" text-anchor="middle" font-family="Liberation Sans, sans-serif" font-size="17.5" fill="#444444">120</text>
<text x="988.5" y="895.5" text-anchor="middle" font-family="Liberation Sans, sans-serif" font-size="17.5" fill="#444444">130</text>
<text x="783.1" y="929.7" text-anchor="middle" font-family="Liberation Sans, sans-serif" font-size="20.5" fill="#444444" textLength="29.4" lengthAdjust="spacingAndGlyphs">$M</text>
<text transform="translate(449,694.7) rotate(-90)" text-anchor="middle" font-family="Liberation Sans, sans-serif" font-size="20.5" fill="#444444" textLength="101.5" lengthAdjust="spacingAndGlyphs">Frequency</text>
<text transform="translate(1132.5,694.7) rotate(-90)" text-anchor="middle" font-family="Liberation Sans, sans-serif" font-size="20.5" fill="#444444" textLength="36" lengthAdjust="spacingAndGlyphs">CDF</text>
<line x1="1360.1" x2="1921.9" y1="803.3" y2="803.3" stroke="#ebebeb" stroke-width="1.5"/>
<line x1="1360.1" x2="1921.9" y1="730.9" y2="730.9" stroke="#ebebeb" stroke-width="1.5"/>
<line x1="1360.1" x2="1921.9" y1="658.4" y2="658.4" stroke="#ebebeb" stroke-width="1.5"/>
<line x1="1360.1" x2="1921.9" y1="586" y2="586" stroke="#ebebeb" stroke-width="1.5"/>
<line x1="1360.1" x2="1921.9" y1="814.3" y2="814.3" stroke="#ebebeb" stroke-width="1.5"/>
<line x1="1360.1" x2="1921.9" y1="752.9" y2="752.9" stroke="#ebebeb" stroke-width="1.5"/>
<line x1="1360.1" x2="1921.9" y1="691.5" y2="691.5" stroke="#ebebeb" stroke-width="1.5"/>
<line x1="1360.1" x2="1921.9" y1="630.1" y2="630.1" stroke="#ebebeb" stroke-width="1.5"/>
<line x1="1360.1" x2="1921.9" y1="568.7" y2="568.7" stroke="#ebebeb" stroke-width="1.5"/>
<rect x="1360.1" y="873.2" width="14" height="2.5" fill="#6fd994" stroke="#22c55e" stroke-width="2.0"/>
<rect x="1374.1" y="868.3" width="14" height="7.4" fill="#6fd994" stroke="#22c55e" stroke-width="2.0"/>
<rect x="1388.2" y="854.8" width="14" height="20.9" fill="#6fd994" stroke="#22c55e" stroke-width="2.0"/>
<rect x="1402.2" y="810" width="14" height="65.7" fill="#6fd994" stroke="#22c55e" stroke-width="2.0"/>
<rect x="1416.3" y="763.3" width="14" height="112.4" fill="#6fd994" stroke="#22c55e" stroke-width="2.0"/>
<rect x="1430.3" y="694" width="14" height="181.7" fill="#6fd994" stroke="#22c55e" stroke-width="2.0"/>
<rect x="1444.4" y="631.3" width="14" height="244.4" fill="#6fd994" stroke="#22c55e" stroke-width="2.0"/>
<rect x="1458.4" y="599.4" width="14" height="276.3" fill="#6fd994" stroke="#22c55e" stroke-width="2.0"/>
<rect x="1472.5" y="589.6" width="14" height="286.1" fill="#6fd994" stroke="#22c55e" stroke-width="2.0"/>
<rect x="1486.5" y="599.4" width="14" height="276.3" fill="#6fd994" stroke="#22c55e" stroke-width="2.0"/>
<rect x="1500.5" y="596.3" width="14" height="279.4" fill="#6fd994" stroke="#22c55e" stroke-width="2.0"/>
<rect x="1514.6" y="598.2" width="14" height="277.5" fill="#6fd994" stroke="#22c55e" stroke-width="2.0"/>
<rect x="1528.6" y="610.5" width="14" height="265.2" fill="#6fd994" stroke="#22c55e" stroke-width="2.0"/>
<rect x="1542.7" y="575.5" width="14" height="300.2" fill="#6fd994" stroke="#22c55e" stroke-width="2.0"/>
<rect x="1556.7" y="552.1" width="14" height="323.6" fill="#6fd994" stroke="#22c55e" stroke-width="2.0"/>
<rect x="1570.8" y="531.2" width="14" height="344.5" fill="#6fd994" stroke="#22c55e" stroke-width="2.0"/>
<rect x="1584.8" y="558.9" width="14" height="316.8" fill="#6fd994" stroke="#22c55e" stroke-width="2.0"/>
<rect x="1598.9" y="531.9" width="14" height="343.8" fill="#6fd994" stroke="#22c55e" stroke-width="2.0"/>
<rect x="1612.9" y="586.5" width="14" height="289.2" fill="#6fd994" stroke="#22c55e" stroke-width="2.0"/>
<rect x="1627" y="594.5" width="14" height="281.2" fill="#a1c3f8" stroke="#1d4ed8" stroke-width="2.2"/>
<rect x="1641" y="628.9" width="14" height="246.8" fill="#a1c3f8" stroke="#1d4ed8" stroke-width="2.2"/>
<rect x="1655" y="652.8" width="14" height="222.9" fill="#a1c3f8" stroke="#1d4ed8" stroke-width="2.2"/>
<rect x="1669.1" y="670.6" width="14" height="205.1" fill="#a1c3f8" stroke="#1d4ed8" stroke-width="2.2"/>
<rect x="1683.1" y="705.6" width="14" height="170.1" fill="#a1c3f8" stroke="#1d4ed8" stroke-width="2.2"/>
<rect x="1697.2" y="729.6" width="14" height="146.1" fill="#a1c3f8" stroke="#1d4ed8" stroke-width="2.2"/>
<rect x="1711.2" y="747.4" width="14" height="128.3" fill="#a1c3f8" stroke="#1d4ed8" stroke-width="2.2"/>
<rect x="1725.3" y="754.1" width="14" height="121.6" fill="#a1c3f8" stroke="#1d4ed8" stroke-width="2.2"/>
<rect x="1739.3" y="783.6" width="14" height="92.1" fill="#a1c3f8" stroke="#1d4ed8" stroke-width="2.2"/>
<rect x="1753.4" y="803.9" width="14" height="71.8" fill="#a1c3f8" stroke="#1d4ed8" stroke-width="2.2"/>
<rect x="1767.4" y="807.5" width="14" height="68.2" fill="#a1c3f8" stroke="#1d4ed8" stroke-width="2.2"/>
<rect x="1781.5" y="814.3" width="14" height="61.4" fill="#a1c3f8" stroke="#1d4ed8" stroke-width="2.2"/>
<rect x="1795.5" y="836.4" width="14" height="39.3" fill="#a1c3f8" stroke="#1d4ed8" stroke-width="2.2"/>
<rect x="1809.5" y="848.7" width="14" height="27" fill="#a1c3f8" stroke="#1d4ed8" stroke-width="2.2"/>
<rect x="1823.6" y="856.1" width="14" height="19.6" fill="#a1c3f8" stroke="#1d4ed8" stroke-width="2.2"/>
<rect x="1837.6" y="866.5" width="14" height="9.2" fill="#a1c3f8" stroke="#1d4ed8" stroke-width="2.2"/>
<rect x="1851.7" y="868.3" width="14" height="7.4" fill="#a1c3f8" stroke="#1d4ed8" stroke-width="2.2"/>
<rect x="1865.7" y="870.2" width="14" height="5.5" fill="#a1c3f8" stroke="#1d4ed8" stroke-width="2.2"/>
<rect x="1879.8" y="871.4" width="14" height="4.3" fill="#a1c3f8" stroke="#1d4ed8" stroke-width="2.2"/>
<rect x="1893.8" y="872.6" width="14" height="3.1" fill="#a1c3f8" stroke="#1d4ed8" stroke-width="2.2"/>
<rect x="1907.9" y="874.5" width="14" height="1.2" fill="#a1c3f8" stroke="#1d4ed8" stroke-width="2.2"/>
<line x1="1360.1" x2="1921.9" y1="875.7" y2="875.7" stroke="#444" stroke-width="1.5"/>
<polyline points="1360.1,875.7 1374.1,875.6 1388.2,875.1 1402.2,873.9 1416.3,870 1430.3,863.4 1444.4,852.7 1458.4,838.3 1472.5,822 1486.5,805.1 1500.5,788.8 1514.6,772.3 1528.6,756 1542.7,740.3 1556.7,722.6 1570.8,703.5 1584.8,683.2 1598.9,664.5 1612.9,644.2 1627,627.2 1641,610.6 1655,596.1 1669.1,582.9 1683.1,570.8 1697.2,560.8 1711.2,552.2 1725.3,544.6 1739.3,537.4 1753.4,532 1767.4,527.8 1781.5,523.7 1795.5,520.1 1809.5,517.8 1823.6,516.2 1837.6,515 1851.7,514.5 1865.7,514.1 1879.8,513.7 1893.8,513.6 1907.9,513.6 1921.9,513.6" fill="none" stroke="#f47a20" stroke-width="3" stroke-linejoin="round"/>
<line x1="1443.1" x2="1443.1" y1="513.6" y2="875.7" stroke="#d62728" stroke-width="3" stroke-dasharray="13.5,4.5,4.5,4.5"/>
<line x1="1582.2" x2="1582.2" y1="513.6" y2="875.7" stroke="#008000" stroke-width="3" stroke-dasharray="13.5,13.5"/>
<line x1="1632.4" x2="1632.4" y1="513.6" y2="875.7" stroke="#dc2626" stroke-width="3"/>
<rect x="1365.8" y="517.6" width="96.6" height="74" fill="#fff"/>
<rect x="1386.5" y="529.6" width="18" height="18" fill="#6fd994" stroke="#22c55e" stroke-width="1.5"/>
<text x="1425.4" y="544.2" font-family="Liberation Sans, sans-serif" font-size="16" fill="#444444" textLength="27.4" lengthAdjust="spacingAndGlyphs">PDF</text>
<line x1="1373.2" x2="1417.8" y1="566.8" y2="566.8" stroke="#f47a20" stroke-width="3"/>
<text x="1425.4" y="573.3" font-family="Liberation Sans, sans-serif" font-size="16" fill="#444444" textLength="28" lengthAdjust="spacingAndGlyphs">CDF</text>
<rect x="1631.4" y="513.6" width="113.2" height="28.4" fill="rgba(255,255,255,0.86)" stroke="#d62728" stroke-width="1.5"/>
<text x="1636.4" y="532.9" font-family="Liberation Sans, sans-serif" font-size="15.4" fill="#d62728" textLength="103.2" lengthAdjust="spacingAndGlyphs">P70: $121.75M</text>
<rect x="1443.1" y="680.5" width="184.4" height="28.2" fill="rgba(255,255,255,0.86)" stroke="#d62728" stroke-width="1.5"/>
<text x="1448.1" y="699.8" font-family="Liberation Sans, sans-serif" font-size="15.4" fill="#d62728" textLength="174.4" lengthAdjust="spacingAndGlyphs">Base Cost YOE: $101.21M</text>
<text x="1357.7" y="882.7" text-anchor="end" font-family="Liberation Sans, sans-serif" font-size="17.8" fill="#444444">0</text>
<text x="1357.7" y="821.3" text-anchor="end" font-family="Liberation Sans, sans-serif" font-size="17.8" fill="#444444">0.01</text>
<text x="1357.7" y="759.9" text-anchor="end" font-family="Liberation Sans, sans-serif" font-size="17.8" fill="#444444">0.02</text>
<text x="1357.7" y="698.5" text-anchor="end" font-family="Liberation Sans, sans-serif" font-size="17.8" fill="#444444">0.03</text>
<text x="1357.7" y="637.1" text-anchor="end" font-family="Liberation Sans, sans-serif" font-size="17.8" fill="#444444">0.04</text>
<text x="1357.7" y="575.7" text-anchor="end" font-family="Liberation Sans, sans-serif" font-size="17.8" fill="#444444">0.05</text>
<text x="1924.7" y="882.1" font-family="Liberation Sans, sans-serif" font-size="17.5" fill="#444444">0</text>
<text x="1924.7" y="809.7" font-family="Liberation Sans, sans-serif" font-size="17.5" fill="#444444">0.2</text>
<text x="1924.7" y="737.3" font-family="Liberation Sans, sans-serif" font-size="17.5" fill="#444444">0.4</text>
<text x="1924.7" y="664.8" font-family="Liberation Sans, sans-serif" font-size="17.5" fill="#444444">0.6</text>
<text x="1924.7" y="592.4" font-family="Liberation Sans, sans-serif" font-size="17.5" fill="#444444">0.8</text>
<text x="1924.7" y="520" font-family="Liberation Sans, sans-serif" font-size="17.5" fill="#444444">1</text>
<text x="1432.3" y="895.4" text-anchor="middle" font-family="Liberation Sans, sans-serif" font-size="17.5" fill="#444444">100</text>
<text x="1615.6" y="895.4" text-anchor="middle" font-family="Liberation Sans, sans-serif" font-size="17.5" fill="#444444">120</text>
<text x="1800" y="895.4" text-anchor="middle" font-family="Liberation Sans, sans-serif" font-size="17.5" fill="#444444">140</text>
<text x="1641" y="929.6" text-anchor="middle" font-family="Liberation Sans, sans-serif" font-size="20.5" fill="#444444" textLength="29.4" lengthAdjust="spacingAndGlyphs">$M</text>
<text transform="translate(1306.8,694.7) rotate(-90)" text-anchor="middle" font-family="Liberation Sans, sans-serif" font-size="20.5" fill="#444444" textLength="101.5" lengthAdjust="spacingAndGlyphs">Frequency</text>
<text transform="translate(1990.5,694.7) rotate(-90)" text-anchor="middle" font-family="Liberation Sans, sans-serif" font-size="20.5" fill="#444444" textLength="36" lengthAdjust="spacingAndGlyphs">CDF</text>
<line x1="502.3" x2="1063.9" y1="1411.9" y2="1411.9" stroke="#ebebeb" stroke-width="1.5"/>
<line x1="502.3" x2="1063.9" y1="1339.5" y2="1339.5" stroke="#ebebeb" stroke-width="1.5"/>
<line x1="502.3" x2="1063.9" y1="1267" y2="1267" stroke="#ebebeb" stroke-width="1.5"/>
<line x1="502.3" x2="1063.9" y1="1194.6" y2="1194.6" stroke="#ebebeb" stroke-width="1.5"/>
<line x1="502.3" x2="1063.9" y1="1418" y2="1418" stroke="#ebebeb" stroke-width="1.5"/>
<line x1="502.3" x2="1063.9" y1="1351.5" y2="1351.5" stroke="#ebebeb" stroke-width="1.5"/>
<line x1="502.3" x2="1063.9" y1="1285.1" y2="1285.1" stroke="#ebebeb" stroke-width="1.5"/>
<line x1="502.3" x2="1063.9" y1="1218.6" y2="1218.6" stroke="#ebebeb" stroke-width="1.5"/>
<line x1="502.3" x2="1063.9" y1="1152.2" y2="1152.2" stroke="#ebebeb" stroke-width="1.5"/>
<rect x="502.3" y="1462.5" width="14" height="21.9" fill="#f9cd8c" stroke="#c2620c" stroke-width="2.0"/>
<rect x="516.3" y="1433.9" width="14" height="50.5" fill="#f9cd8c" stroke="#c2620c" stroke-width="2.0"/>
<rect x="530.4" y="1404" width="14" height="80.4" fill="#f9cd8c" stroke="#c2620c" stroke-width="2.0"/>
<rect x="544.4" y="1357.5" width="14" height="126.9" fill="#f9cd8c" stroke="#c2620c" stroke-width="2.0"/>
<rect x="558.5" y="1333.6" width="14" height="150.8" fill="#f9cd8c" stroke="#c2620c" stroke-width="2.0"/>
<rect x="572.5" y="1301.7" width="14" height="182.7" fill="#f9cd8c" stroke="#c2620c" stroke-width="2.0"/>
<rect x="586.5" y="1309.7" width="14" height="174.7" fill="#f9cd8c" stroke="#c2620c" stroke-width="2.0"/>
<rect x="600.6" y="1289.7" width="14" height="194.7" fill="#f9cd8c" stroke="#c2620c" stroke-width="2.0"/>
<rect x="614.6" y="1288.4" width="14" height="196" fill="#f9cd8c" stroke="#c2620c" stroke-width="2.0"/>
<rect x="628.7" y="1296.4" width="14" height="188" fill="#f9cd8c" stroke="#c2620c" stroke-width="2.0"/>
<rect x="642.7" y="1287.1" width="14" height="197.3" fill="#f9cd8c" stroke="#c2620c" stroke-width="2.0"/>
<rect x="656.7" y="1268.5" width="14" height="215.9" fill="#f9cd8c" stroke="#c2620c" stroke-width="2.0"/>
<rect x="670.8" y="1271.1" width="14" height="213.3" fill="#f9cd8c" stroke="#c2620c" stroke-width="2.0"/>
<rect x="684.8" y="1247.2" width="14" height="237.2" fill="#f9cd8c" stroke="#c2620c" stroke-width="2.0"/>
<rect x="698.9" y="1239.9" width="14" height="244.5" fill="#f9cd8c" stroke="#c2620c" stroke-width="2.0"/>
<rect x="712.9" y="1223.3" width="14" height="261.1" fill="#f9cd8c" stroke="#c2620c" stroke-width="2.0"/>
<rect x="726.9" y="1195.4" width="14" height="289" fill="#f9cd8c" stroke="#c2620c" stroke-width="2.0"/>
<rect x="741" y="1178.1" width="14" height="306.3" fill="#f9cd8c" stroke="#c2620c" stroke-width="2.0"/>
<rect x="755" y="1139.6" width="14" height="344.8" fill="#f9cd8c" stroke="#c2620c" stroke-width="2.0"/>
<rect x="769.1" y="1150.2" width="14" height="334.2" fill="#f9cd8c" stroke="#c2620c" stroke-width="2.0"/>
<rect x="783.1" y="1189.4" width="14" height="295" fill="#f9cd8c" stroke="#c2620c" stroke-width="2.0"/>
<rect x="797.1" y="1168.8" width="14" height="315.6" fill="#f9cd8c" stroke="#c2620c" stroke-width="2.0"/>
<rect x="811.2" y="1203.4" width="14" height="281" fill="#f9cd8c" stroke="#c2620c" stroke-width="2.0"/>
<rect x="825.2" y="1216.6" width="14" height="267.8" fill="#f9cd8c" stroke="#c2620c" stroke-width="2.0"/>
<rect x="839.3" y="1225.9" width="14" height="258.5" fill="#f9cd8c" stroke="#c2620c" stroke-width="2.0"/>
<rect x="853.3" y="1259.2" width="14" height="225.2" fill="#f9cd8c" stroke="#c2620c" stroke-width="2.0"/>
<rect x="867.3" y="1266.5" width="14" height="217.9" fill="#f9cd8c" stroke="#c2620c" stroke-width="2.0"/>
<rect x="881.4" y="1292.4" width="14" height="192" fill="#f9cd8c" stroke="#c2620c" stroke-width="2.0"/>
<rect x="895.4" y="1336.2" width="14" height="148.2" fill="#f9cd8c" stroke="#c2620c" stroke-width="2.0"/>
<rect x="909.5" y="1367.5" width="14" height="116.9" fill="#f9cd8c" stroke="#c2620c" stroke-width="2.0"/>
<rect x="923.5" y="1389.4" width="14" height="95" fill="#f9cd8c" stroke="#c2620c" stroke-width="2.0"/>
<rect x="937.5" y="1414" width="14" height="70.4" fill="#f9cd8c" stroke="#c2620c" stroke-width="2.0"/>
<rect x="951.6" y="1429.3" width="14" height="55.1" fill="#f9cd8c" stroke="#c2620c" stroke-width="2.0"/>
<rect x="965.6" y="1443.2" width="14" height="41.2" fill="#f9cd8c" stroke="#c2620c" stroke-width="2.0"/>
<rect x="979.7" y="1459.2" width="14" height="25.2" fill="#f9cd8c" stroke="#c2620c" stroke-width="2.0"/>
<rect x="993.7" y="1464.5" width="14" height="19.9" fill="#f9cd8c" stroke="#c2620c" stroke-width="2.0"/>
<rect x="1007.7" y="1475.1" width="14" height="9.3" fill="#f9cd8c" stroke="#c2620c" stroke-width="2.0"/>
<rect x="1021.8" y="1478.4" width="14" height="6" fill="#f9cd8c" stroke="#c2620c" stroke-width="2.0"/>
<rect x="1035.8" y="1479.7" width="14" height="4.7" fill="#f9cd8c" stroke="#c2620c" stroke-width="2.0"/>
<rect x="1049.9" y="1483.1" width="14" height="1.3" fill="#f9cd8c" stroke="#c2620c" stroke-width="2.0"/>
<line x1="502.3" x2="1063.9" y1="1484.4" y2="1484.4" stroke="#444" stroke-width="1.5"/>
<polyline points="502.3,1484.4 516.3,1483.2 530.4,1480.5 544.4,1476.1 558.5,1469.1 572.5,1460.9 586.5,1451 600.6,1441.4 614.6,1430.8 628.7,1420.1 642.7,1409.9 656.7,1399.1 670.8,1387.3 684.8,1375.7 698.9,1362.8 712.9,1349.4 726.9,1335.2 741,1319.4 755,1302.7 769.1,1283.9 783.1,1265.7 797.1,1249.6 811.2,1232.4 825.2,1217.1 839.3,1202.5 853.3,1188.4 867.3,1176.1 881.4,1164.2 895.4,1153.8 909.5,1145.7 923.5,1139.3 937.5,1134.1 951.6,1130.3 965.6,1127.3 979.7,1125 993.7,1123.7 1007.7,1122.6 1021.8,1122.1 1035.8,1122.1 1049.9,1122.1 1063.9,1122.1" fill="none" stroke="#1f4fd6" stroke-width="3" stroke-linejoin="round"/>
<line x1="747.8" x2="747.8" y1="1122.1" y2="1484.4" stroke="#008000" stroke-width="3" stroke-dasharray="13.5,13.5"/>
<line x1="813.2" x2="813.2" y1="1122.1" y2="1484.4" stroke="#dc2626" stroke-width="3"/>
<rect x="508" y="1126.1" width="96.6" height="74" fill="#fff"/>
<rect x="528.7" y="1138.1" width="18" height="18" fill="#f9cd8c" stroke="#c2620c" stroke-width="1.5"/>
<text x="567.6" y="1152.7" font-family="Liberation Sans, sans-serif" font-size="16" fill="#444444" textLength="27.4" lengthAdjust="spacingAndGlyphs">PDF</text>
<line x1="515.4" x2="560" y1="1175.3" y2="1175.3" stroke="#1f4fd6" stroke-width="3"/>
<text x="567.6" y="1181.8" font-family="Liberation Sans, sans-serif" font-size="16" fill="#444444" textLength="28" lengthAdjust="spacingAndGlyphs">CDF</text>
<rect x="813.2" y="1122.1" width="108.3" height="29.3" fill="rgba(255,255,255,0.86)" stroke="#d62728" stroke-width="1.5"/>
<text x="818.2" y="1141.4" font-family="Liberation Sans, sans-serif" font-size="15.4" fill="#d62728" textLength="98.3" lengthAdjust="spacingAndGlyphs">P70: Dec 2030</text>
<text x="499.9" y="1491.4" text-anchor="end" font-family="Liberation Sans, sans-serif" font-size="17.8" fill="#444444">0</text>
<text x="499.9" y="1425" text-anchor="end" font-family="Liberation Sans, sans-serif" font-size="17.8" fill="#444444">0.01</text>
<text x="499.9" y="1358.5" text-anchor="end" font-family="Liberation Sans, sans-serif" font-size="17.8" fill="#444444">0.02</text>
<text x="499.9" y="1292.1" text-anchor="end" font-family="Liberation Sans, sans-serif" font-size="17.8" fill="#444444">0.03</text>
<text x="499.9" y="1225.6" text-anchor="end" font-family="Liberation Sans, sans-serif" font-size="17.8" fill="#444444">0.04</text>
<text x="499.9" y="1159.2" text-anchor="end" font-family="Liberation Sans, sans-serif" font-size="17.8" fill="#444444">0.05</text>
<text x="1066.7" y="1490.8" font-family="Liberation Sans, sans-serif" font-size="17.5" fill="#444444">0</text>
<text x="1066.7" y="1418.3" font-family="Liberation Sans, sans-serif" font-size="17.5" fill="#444444">0.2</text>
<text x="1066.7" y="1345.9" font-family="Liberation Sans, sans-serif" font-size="17.5" fill="#444444">0.4</text>
<text x="1066.7" y="1273.4" font-family="Liberation Sans, sans-serif" font-size="17.5" fill="#444444">0.6</text>
<text x="1066.7" y="1201" font-family="Liberation Sans, sans-serif" font-size="17.5" fill="#444444">0.8</text>
<text x="1066.7" y="1128.5" font-family="Liberation Sans, sans-serif" font-size="17.5" fill="#444444">1</text>
<text x="571.7" y="1504.1" text-anchor="middle" font-family="Liberation Sans, sans-serif" font-size="17.5" fill="#444444">Jan 2030</text>
<text x="695.7" y="1504.1" text-anchor="middle" font-family="Liberation Sans, sans-serif" font-size="17.5" fill="#444444">Jul 2030</text>
<text x="821.2" y="1504.1" text-anchor="middle" font-family="Liberation Sans, sans-serif" font-size="17.5" fill="#444444">Jan 2031</text>
<text x="944.8" y="1504.1" text-anchor="middle" font-family="Liberation Sans, sans-serif" font-size="17.5" fill="#444444">Jul 2031</text>
<text x="783.1" y="1538.3" text-anchor="middle" font-family="Liberation Sans, sans-serif" font-size="20.5" fill="#444444" textLength="292" lengthAdjust="spacingAndGlyphs">Total Project Completion Date</text>
<text transform="translate(449,1303.2) rotate(-90)" text-anchor="middle" font-family="Liberation Sans, sans-serif" font-size="20.5" fill="#444444" textLength="101.5" lengthAdjust="spacingAndGlyphs">Frequency</text>
<text transform="translate(1132.5,1303.2) rotate(-90)" text-anchor="middle" font-family="Liberation Sans, sans-serif" font-size="20.5" fill="#444444" textLength="36" lengthAdjust="spacingAndGlyphs">CDF</text>
<line x1="1360.3" x2="1922" y1="1411.9" y2="1411.9" stroke="#ebebeb" stroke-width="1.5"/>
<line x1="1360.3" x2="1922" y1="1339.5" y2="1339.5" stroke="#ebebeb" stroke-width="1.5"/>
<line x1="1360.3" x2="1922" y1="1267" y2="1267" stroke="#ebebeb" stroke-width="1.5"/>
<line x1="1360.3" x2="1922" y1="1194.6" y2="1194.6" stroke="#ebebeb" stroke-width="1.5"/>
<line x1="1360.3" x2="1922" y1="1420.9" y2="1420.9" stroke="#ebebeb" stroke-width="1.5"/>
<line x1="1360.3" x2="1922" y1="1357.5" y2="1357.5" stroke="#ebebeb" stroke-width="1.5"/>
<line x1="1360.3" x2="1922" y1="1294" y2="1294" stroke="#ebebeb" stroke-width="1.5"/>
<line x1="1360.3" x2="1922" y1="1230.5" y2="1230.5" stroke="#ebebeb" stroke-width="1.5"/>
<line x1="1360.3" x2="1922" y1="1167.1" y2="1167.1" stroke="#ebebeb" stroke-width="1.5"/>
<rect x="1360.3" y="1481.2" width="14" height="3.2" fill="#a1c3f8" stroke="#1d4ed8" stroke-width="2.2"/>
<rect x="1374.3" y="1478.7" width="14" height="5.7" fill="#a1c3f8" stroke="#1d4ed8" stroke-width="2.2"/>
<rect x="1388.4" y="1464.7" width="14" height="19.7" fill="#a1c3f8" stroke="#1d4ed8" stroke-width="2.2"/>
<rect x="1402.4" y="1453.3" width="14" height="31.1" fill="#a1c3f8" stroke="#1d4ed8" stroke-width="2.2"/>
<rect x="1416.5" y="1430.5" width="14" height="53.9" fill="#a1c3f8" stroke="#1d4ed8" stroke-width="2.2"/>
<rect x="1430.5" y="1408.9" width="14" height="75.5" fill="#a1c3f8" stroke="#1d4ed8" stroke-width="2.2"/>
<rect x="1444.6" y="1369.5" width="14" height="114.9" fill="#a1c3f8" stroke="#1d4ed8" stroke-width="2.2"/>
<rect x="1458.6" y="1347.3" width="14" height="137.1" fill="#a1c3f8" stroke="#1d4ed8" stroke-width="2.2"/>
<rect x="1472.6" y="1323.2" width="14" height="161.2" fill="#a1c3f8" stroke="#1d4ed8" stroke-width="2.2"/>
<rect x="1486.7" y="1305.4" width="14" height="179" fill="#a1c3f8" stroke="#1d4ed8" stroke-width="2.2"/>
<rect x="1500.7" y="1276.9" width="14" height="207.5" fill="#a1c3f8" stroke="#1d4ed8" stroke-width="2.2"/>
<rect x="1514.8" y="1271.1" width="14" height="213.3" fill="#a1c3f8" stroke="#1d4ed8" stroke-width="2.2"/>
<rect x="1528.8" y="1275.6" width="14" height="208.8" fill="#a1c3f8" stroke="#1d4ed8" stroke-width="2.2"/>
<rect x="1542.9" y="1263.5" width="14" height="220.9" fill="#a1c3f8" stroke="#1d4ed8" stroke-width="2.2"/>
<rect x="1556.9" y="1224.8" width="14" height="259.6" fill="#a1c3f8" stroke="#1d4ed8" stroke-width="2.2"/>
<rect x="1570.9" y="1200.1" width="14" height="284.3" fill="#a1c3f8" stroke="#1d4ed8" stroke-width="2.2"/>
<rect x="1585" y="1213.4" width="14" height="271" fill="#a1c3f8" stroke="#1d4ed8" stroke-width="2.2"/>
<rect x="1599" y="1160.7" width="14" height="323.7" fill="#a1c3f8" stroke="#1d4ed8" stroke-width="2.2"/>
<rect x="1613.1" y="1192.4" width="14" height="292" fill="#a1c3f8" stroke="#1d4ed8" stroke-width="2.2"/>
<rect x="1627.1" y="1139.8" width="14" height="344.6" fill="#a1c3f8" stroke="#1d4ed8" stroke-width="2.2"/>
<rect x="1641.2" y="1139.8" width="14" height="344.6" fill="#a1c3f8" stroke="#1d4ed8" stroke-width="2.2"/>
<rect x="1655.2" y="1155.6" width="14" height="328.8" fill="#a1c3f8" stroke="#1d4ed8" stroke-width="2.2"/>
<rect x="1669.2" y="1165.1" width="14" height="319.3" fill="#a1c3f8" stroke="#1d4ed8" stroke-width="2.2"/>
<rect x="1683.3" y="1199.4" width="14" height="285" fill="#a1c3f8" stroke="#1d4ed8" stroke-width="2.2"/>
<rect x="1697.3" y="1196.2" width="14" height="288.2" fill="#a1c3f8" stroke="#1d4ed8" stroke-width="2.2"/>
<rect x="1711.4" y="1222.3" width="14" height="262.1" fill="#a1c3f8" stroke="#1d4ed8" stroke-width="2.2"/>
<rect x="1725.4" y="1242.6" width="14" height="241.8" fill="#a1c3f8" stroke="#1d4ed8" stroke-width="2.2"/>
<rect x="1739.4" y="1277.5" width="14" height="206.9" fill="#a1c3f8" stroke="#1d4ed8" stroke-width="2.2"/>
<rect x="1753.5" y="1304.8" width="14" height="179.6" fill="#a1c3f8" stroke="#1d4ed8" stroke-width="2.2"/>
<rect x="1767.5" y="1355.6" width="14" height="128.8" fill="#a1c3f8" stroke="#1d4ed8" stroke-width="2.2"/>
<rect x="1781.6" y="1367" width="14" height="117.4" fill="#a1c3f8" stroke="#1d4ed8" stroke-width="2.2"/>
<rect x="1795.6" y="1411.4" width="14" height="73" fill="#a1c3f8" stroke="#1d4ed8" stroke-width="2.2"/>
<rect x="1809.7" y="1422.8" width="14" height="61.6" fill="#a1c3f8" stroke="#1d4ed8" stroke-width="2.2"/>
<rect x="1823.7" y="1445.7" width="14" height="38.7" fill="#a1c3f8" stroke="#1d4ed8" stroke-width="2.2"/>
<rect x="1837.7" y="1459.6" width="14" height="24.8" fill="#a1c3f8" stroke="#1d4ed8" stroke-width="2.2"/>
<rect x="1851.8" y="1464.7" width="14" height="19.7" fill="#a1c3f8" stroke="#1d4ed8" stroke-width="2.2"/>
<rect x="1865.8" y="1473" width="14" height="11.4" fill="#a1c3f8" stroke="#1d4ed8" stroke-width="2.2"/>
<rect x="1879.9" y="1480" width="14" height="4.4" fill="#a1c3f8" stroke="#1d4ed8" stroke-width="2.2"/>
<rect x="1893.9" y="1480.6" width="14" height="3.8" fill="#a1c3f8" stroke="#1d4ed8" stroke-width="2.2"/>
<rect x="1908" y="1481.9" width="14" height="2.5" fill="#a1c3f8" stroke="#1d4ed8" stroke-width="2.2"/>
<line x1="1360.3" x2="1922" y1="1484.4" y2="1484.4" stroke="#444" stroke-width="1.5"/>
<polyline points="1360.3,1484.4 1374.3,1484.2 1388.4,1483.9 1402.4,1482.8 1416.5,1481 1430.5,1477.9 1444.6,1473.6 1458.6,1467 1472.6,1459.2 1486.7,1450 1500.7,1439.8 1514.8,1428 1528.8,1415.8 1542.9,1403.9 1556.9,1391.3 1570.9,1376.4 1585,1360.2 1599,1344.7 1613.1,1326.3 1627.1,1309.6 1641.2,1289.9 1655.2,1270.2 1669.2,1251.5 1683.3,1233.3 1697.3,1217 1711.4,1200.5 1725.4,1185.6 1739.4,1171.8 1753.5,1160 1767.5,1149.7 1781.6,1142.4 1795.6,1135.7 1809.7,1131.5 1823.7,1128 1837.7,1125.8 1851.8,1124.3 1865.8,1123.2 1879.9,1122.6 1893.9,1122.3 1908,1122.1 1922,1122.1" fill="none" stroke="#f47a20" stroke-width="3" stroke-linejoin="round"/>
<line x1="1627.1" x2="1627.1" y1="1122.1" y2="1484.4" stroke="#008000" stroke-width="3" stroke-dasharray="13.5,13.5"/>
<line x1="1686" x2="1686" y1="1122.1" y2="1484.4" stroke="#dc2626" stroke-width="3"/>
<rect x="1366" y="1126.1" width="96.6" height="74" fill="#fff"/>
<rect x="1386.7" y="1138.1" width="18" height="18" fill="#a1c3f8" stroke="#1d4ed8" stroke-width="1.5"/>
<text x="1425.6" y="1152.7" font-family="Liberation Sans, sans-serif" font-size="16" fill="#444444" textLength="27.4" lengthAdjust="spacingAndGlyphs">PDF</text>
<line x1="1373.4" x2="1418" y1="1175.3" y2="1175.3" stroke="#f47a20" stroke-width="3"/>
<text x="1425.6" y="1181.8" font-family="Liberation Sans, sans-serif" font-size="16" fill="#444444" textLength="28" lengthAdjust="spacingAndGlyphs">CDF</text>
<rect x="1686" y="1122.1" width="147.7" height="29.3" fill="rgba(255,255,255,0.86)" stroke="#d62728" stroke-width="1.5"/>
<text x="1691" y="1141.4" font-family="Liberation Sans, sans-serif" font-size="15.4" fill="#d62728" textLength="137.7" lengthAdjust="spacingAndGlyphs">P70: 123.93 months</text>
<text x="1357.9" y="1491.4" text-anchor="end" font-family="Liberation Sans, sans-serif" font-size="17.8" fill="#444444">0</text>
<text x="1357.9" y="1427.9" text-anchor="end" font-family="Liberation Sans, sans-serif" font-size="17.8" fill="#444444">0.01</text>
<text x="1357.9" y="1364.5" text-anchor="end" font-family="Liberation Sans, sans-serif" font-size="17.8" fill="#444444">0.02</text>
<text x="1357.9" y="1301" text-anchor="end" font-family="Liberation Sans, sans-serif" font-size="17.8" fill="#444444">0.03</text>
<text x="1357.9" y="1237.5" text-anchor="end" font-family="Liberation Sans, sans-serif" font-size="17.8" fill="#444444">0.04</text>
<text x="1357.9" y="1174.1" text-anchor="end" font-family="Liberation Sans, sans-serif" font-size="17.8" fill="#444444">0.05</text>
<text x="1924.8" y="1490.8" font-family="Liberation Sans, sans-serif" font-size="17.5" fill="#444444">0</text>
<text x="1924.8" y="1418.3" font-family="Liberation Sans, sans-serif" font-size="17.5" fill="#444444">0.2</text>
<text x="1924.8" y="1345.9" font-family="Liberation Sans, sans-serif" font-size="17.5" fill="#444444">0.4</text>
<text x="1924.8" y="1273.4" font-family="Liberation Sans, sans-serif" font-size="17.5" fill="#444444">0.6</text>
<text x="1924.8" y="1201" font-family="Liberation Sans, sans-serif" font-size="17.5" fill="#444444">0.8</text>
<text x="1924.8" y="1128.5" font-family="Liberation Sans, sans-serif" font-size="17.5" fill="#444444">1</text>
<text x="1437.3" y="1504.1" text-anchor="middle" font-family="Liberation Sans, sans-serif" font-size="17.5" fill="#444444">110</text>
<text x="1615.8" y="1504.1" text-anchor="middle" font-family="Liberation Sans, sans-serif" font-size="17.5" fill="#444444">120</text>
<text x="1794.8" y="1504.1" text-anchor="middle" font-family="Liberation Sans, sans-serif" font-size="17.5" fill="#444444">130</text>
<text x="1641.2" y="1538.3" text-anchor="middle" font-family="Liberation Sans, sans-serif" font-size="20.5" fill="#444444" textLength="74.6" lengthAdjust="spacingAndGlyphs">months</text>
<text transform="translate(1307,1303.2) rotate(-90)" text-anchor="middle" font-family="Liberation Sans, sans-serif" font-size="20.5" fill="#444444" textLength="101.5" lengthAdjust="spacingAndGlyphs">Frequency</text>
<text transform="translate(1990.6,1303.2) rotate(-90)" text-anchor="middle" font-family="Liberation Sans, sans-serif" font-size="20.5" fill="#444444" textLength="36" lengthAdjust="spacingAndGlyphs">CDF</text>
<line x1="502.6" x2="1921.4" y1="1875.8" y2="1875.8" stroke="#ebebeb" stroke-width="1.5"/>
<line x1="502.6" x2="1921.4" y1="1803.3" y2="1803.3" stroke="#ebebeb" stroke-width="1.5"/>
<line x1="502.6" x2="1921.4" y1="1896.4" y2="1896.4" stroke="#ebebeb" stroke-width="1.5"/>
<line x1="502.6" x2="1921.4" y1="1798" y2="1798" stroke="#ebebeb" stroke-width="1.5"/>
<rect x="538.1" y="1869" width="35.5" height="224.2" fill="#a1c3f8" stroke="#1d4ed8" stroke-width="2.2"/>
<rect x="573.5" y="1801.3" width="35.5" height="291.9" fill="#a1c3f8" stroke="#1d4ed8" stroke-width="2.2"/>
<rect x="609" y="1813.5" width="35.5" height="279.7" fill="#a1c3f8" stroke="#1d4ed8" stroke-width="2.2"/>
<rect x="644.5" y="1975.1" width="35.5" height="118.1" fill="#a1c3f8" stroke="#1d4ed8" stroke-width="2.2"/>
<rect x="680" y="2034.2" width="35.5" height="59" fill="#a1c3f8" stroke="#1d4ed8" stroke-width="2.2"/>
<polyline points="630,1920 662.2,1906 687.1,1892.6 719.5,1883.4 752,1865.9 789.4,1844.2 824.3,1826 859.3,1812.8 889.2,1807.3 964,1802.3 1028,1799.6 1086.9,1796.7 1171,1787.4 1220,1781 1338.8,1762.8 1462.2,1744.5 1507.9,1740 1613,1734 1699.8,1731.7 1921.4,1730.8" fill="none" stroke="#f47a20" stroke-width="3" stroke-linejoin="round"/>
<rect x="516" y="1735" width="97.5" height="68.5" fill="#fff"/>
<rect x="537.2" y="1747.4" width="18" height="18" fill="#a1c3f8" stroke="#1d4ed8" stroke-width="1.5"/>
<text x="576.8" y="1762" font-family="Liberation Sans, sans-serif" font-size="16" fill="#444444">PDF</text>
<line x1="523.7" x2="568.6" y1="1784.8" y2="1784.8" stroke="#f47a20" stroke-width="3"/>
<text x="576.8" y="1791" font-family="Liberation Sans, sans-serif" font-size="16" fill="#444444">CDF</text>
<line x1="789.2" x2="789.2" y1="1730.8" y2="1906" stroke="#008000" stroke-width="3" stroke-dasharray="13.5,13.5"/>
<line x1="796.9" x2="796.9" y1="1730.8" y2="1906" stroke="#dc2626" stroke-width="3"/>
<rect x="796.9" y="1731.2" width="94.3" height="28.7" fill="#fff" stroke="#d62728" stroke-width="1.5"/>
<text x="802.2" y="1750.5" font-family="Liberation Sans, sans-serif" font-size="15.4" fill="#d62728" textLength="84.3" lengthAdjust="spacingAndGlyphs">P70: $9.76M</text>
<text x="500.2" y="1903.4" text-anchor="end" font-family="Liberation Sans, sans-serif" font-size="17.8" fill="#444444">0.1</text>
<text x="500.2" y="1805" text-anchor="end" font-family="Liberation Sans, sans-serif" font-size="17.8" fill="#444444">0.15</text>
<text x="1924.2" y="1882.2" font-family="Liberation Sans, sans-serif" font-size="17.5" fill="#444444">0.6</text>
<text x="1924.2" y="1809.7" font-family="Liberation Sans, sans-serif" font-size="17.5" fill="#444444">0.8</text>
<text x="1924.2" y="1737.2" font-family="Liberation Sans, sans-serif" font-size="17.5" fill="#444444">1</text>
<text transform="translate(449.3,1912.5) rotate(-90)" text-anchor="middle" font-family="Liberation Sans, sans-serif" font-size="20.5" fill="#444444" textLength="101.5" lengthAdjust="spacingAndGlyphs">Frequency</text>
<text transform="translate(1990,1913) rotate(-90)" text-anchor="middle" font-family="Liberation Sans, sans-serif" font-size="20.5" fill="#444444" textLength="36" lengthAdjust="spacingAndGlyphs">CDF</text></svg>
<div style="position:absolute;left:2123.5px;top:55.2px;width:30.5px;height:1851px;background:#fcfcfc"></div>
<div style="position:absolute;left:2129.5px;top:91px;width:18.5px;height:562px;border-radius:9px;background:#8a8a8a"></div>
<svg class="ic" style="left:2128px;top:62px;width:22px;height:16px" viewBox="0 0 22 16"><path d="M11 3.5 18.5 14H3.5z" fill="#8a8a8a" stroke="#8a8a8a" stroke-width="2.6" stroke-linejoin="round"/></svg>
<svg class="ic" style="left:2128px;top:1882px;width:22px;height:16px" viewBox="0 0 22 16"><path d="M11 12.5 18.5 2H3.5z" fill="#8a8a8a" stroke="#8a8a8a" stroke-width="2.6" stroke-linejoin="round"/></svg>
<div style="position:absolute;left:0;top:1890px;width:16px;height:16px;background:radial-gradient(circle at 16px 0, transparent 15px, #1a1c1e 16px)"></div>
<div style="position:absolute;left:2138px;top:1890px;width:16px;height:16px;background:radial-gradient(circle at 0 0, transparent 15px, #1a1c1e 16px)"></div>
</div></body></html>
